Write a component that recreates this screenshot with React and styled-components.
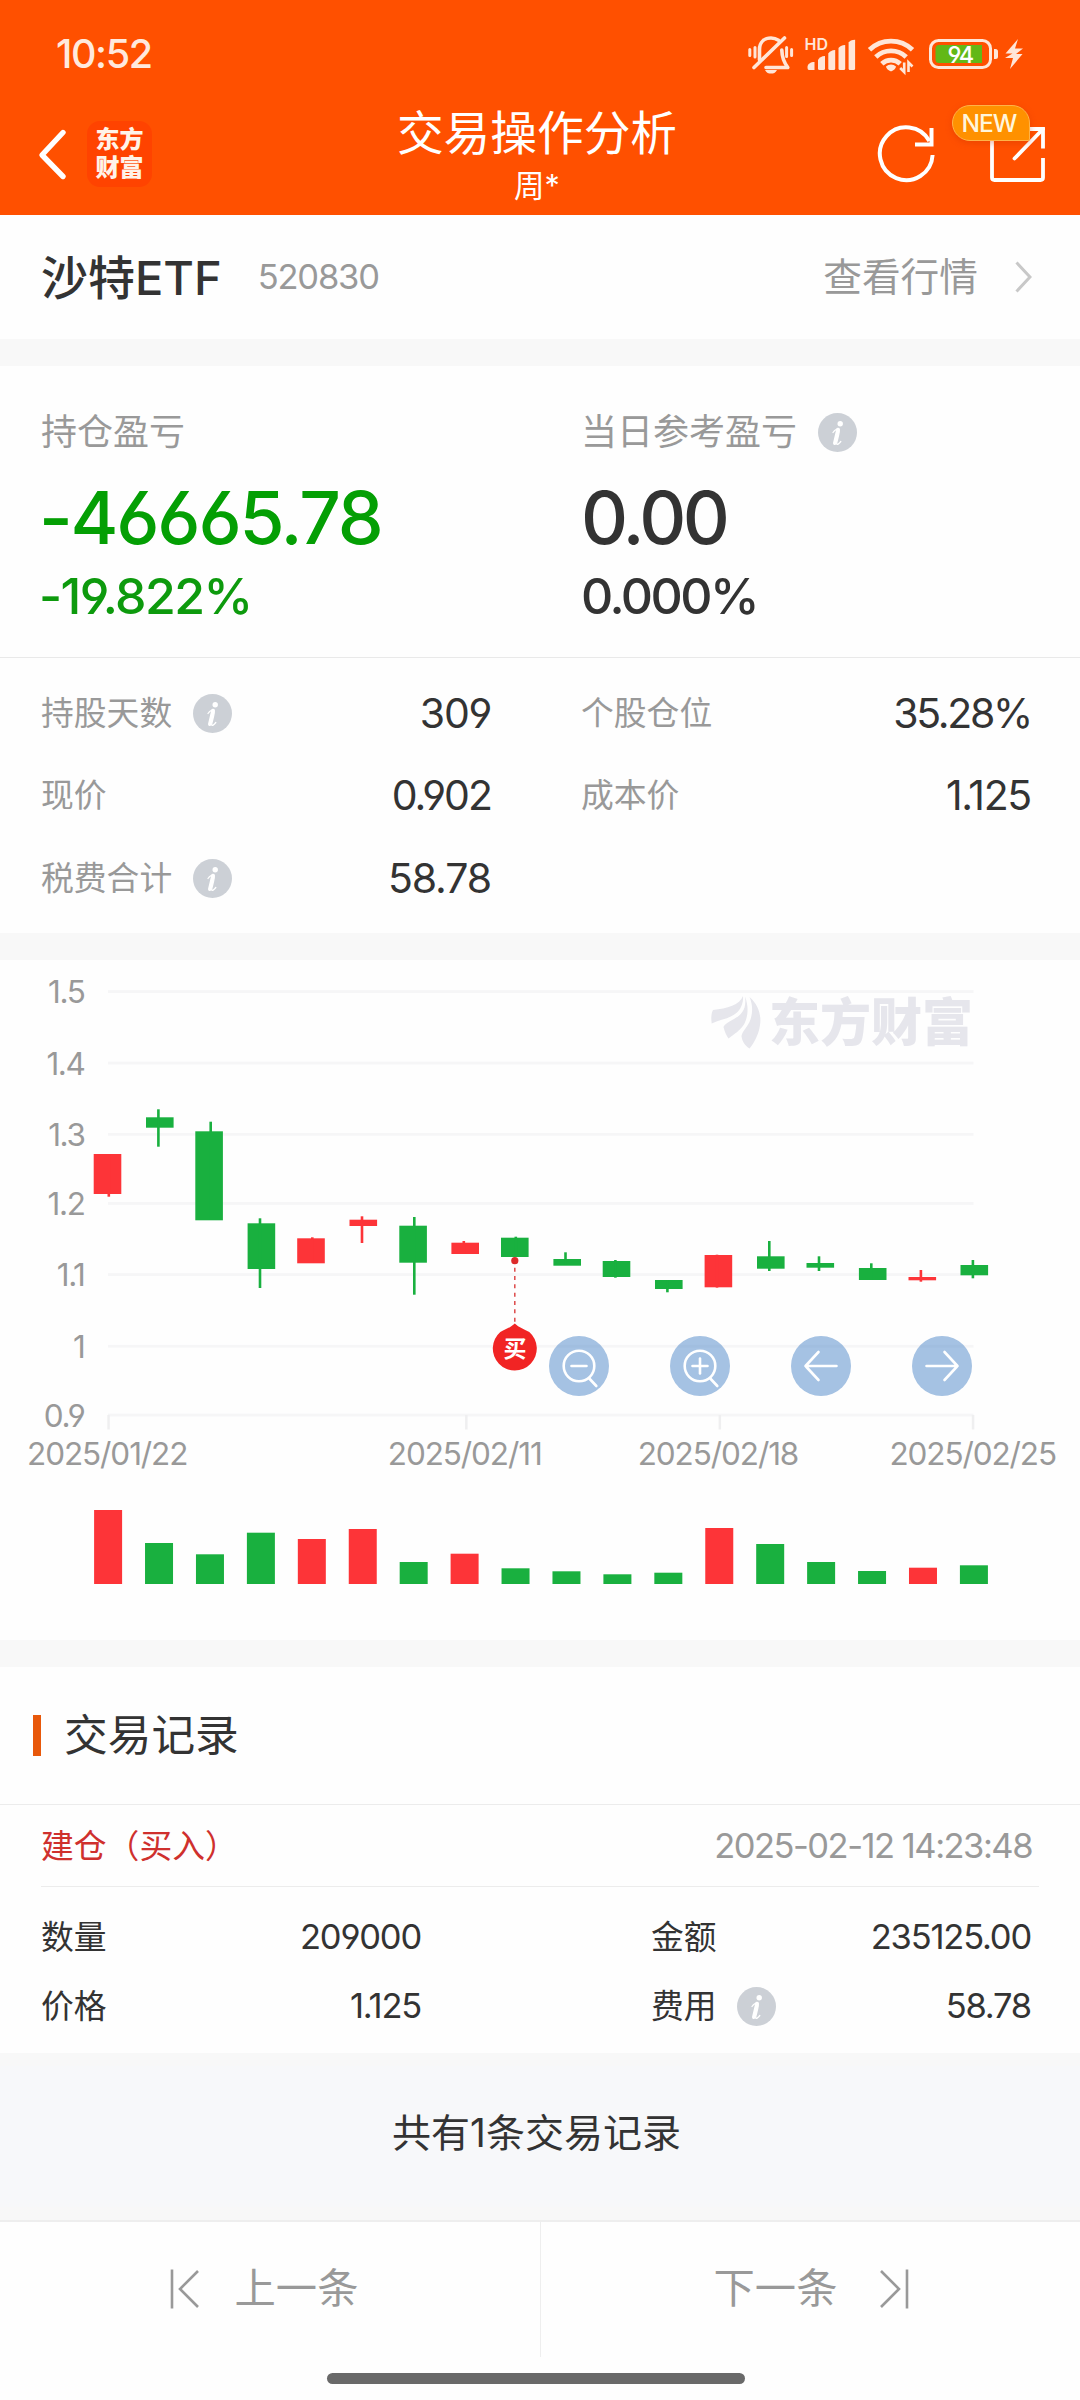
import React from "react";
import styled, { createGlobalStyle } from "styled-components";

const FONT = `Inter, "Noto Sans CJK SC", "Liberation Sans", sans-serif`;
const RED = "#fd3438";
const GREEN = "#19b03f";

const GlobalStyle = createGlobalStyle`
  *, *::before, *::after { box-sizing: border-box; }
  html, body { margin: 0; padding: 0; background: #fff; }
  body { font-family: ${FONT}; font-feature-settings: "cv03", "cv04", "calt" 0; }
  button { font: inherit; color: inherit; background: none; border: 0; padding: 0; }
`;

const Screen = styled.main`
  width: 1080px;
  height: 2400px;
  overflow: hidden;
  display: flex;
  flex-direction: column;
  background: #fefefe;
  color: #333;
  line-height: 1;
  white-space: nowrap;
`;

const Text = styled.span`
  font-size: ${(p) => p.$size}px;
  font-weight: ${(p) => p.$weight || 400};
  letter-spacing: ${(p) => p.$track || 0}px;
  margin-left: ${(p) => p.$outdent || 0}px;
  color: ${(p) => p.$color || "#333"};
  line-height: 1;
`;

const Header = styled.header`
  flex: none;
  height: 215px;
  background: #ff5000;
  color: #fff;
`;

const StatusBar = styled.div`
  height: 107px;
  padding: 2px 52px 0 56px;
  display: flex;
  align-items: center;
  justify-content: space-between;
`;

const NavBar = styled.div`
  height: 108px;
  display: grid;
  grid-template-columns: 360px 1fr 360px;
`;

const NavLeft = styled.div`
  display: flex;
  padding: 14px 0 0 37px;
  gap: 20px;
`;

const BackButton = styled.button`
  width: 30px;
  height: 66px;
  display: flex;
  align-items: center;
`;

const BrandTile = styled.div`
  width: 65px;
  height: 66px;
  border-radius: 13px;
  background: #ff4300;
  display: flex;
  flex-direction: column;
  align-items: center;
  justify-content: center;
  gap: 4px;
  font-size: 24px;
  font-weight: 900;
  line-height: 24px;
  color: #fff3e8;
`;

const NavTitle = styled.div`
  display: flex;
  flex-direction: column;
  align-items: center;
  padding: 3px 6px 0 0;
`;

const NavSub = styled.div`
  display: flex;
  align-items: flex-start;
  margin-top: 14px;
`;

const NavRight = styled.div`
  position: relative;
  padding: 17px 32px 0 0;
  display: flex;
  justify-content: flex-end;
  gap: 50px;
`;

const NewBadge = styled.span`
  position: absolute;
  left: 232px;
  top: -2px;
  width: 78px;
  height: 36px;
  border: 1px solid #ffb347;
  border-radius: 18px 18px 2px 18px;
  background: #ff9100;
  box-shadow: 0 2px 6px rgba(200, 50, 0, 0.35);
  display: flex;
  align-items: center;
  justify-content: center;
  padding-right: 4px;
`;

const StockRow = styled.section`
  flex: none;
  height: 124px;
  padding: 1px 48px 0 41px;
  display: flex;
  align-items: center;
`;

const StockCode = styled.div`
  margin-left: 36px;
  flex: 1;
`;

const QuoteLink = styled.a`
  display: flex;
  align-items: center;
  gap: 37px;
`;

const Gap = styled.div`
  flex: none;
  height: 27px;
  background: #f8f8f8;
`;

const Summary = styled.section`
  flex: none;
  height: 292px;
  display: grid;
  grid-template-columns: 540px 540px;
  border-bottom: 1px solid #e9e9e9;
  padding-top: 46px;
`;

const SummaryCol = styled.div`
  padding-left: 41px;
  display: flex;
  flex-direction: column;
`;

const LabelLine = styled.div`
  display: flex;
  align-items: center;
  gap: ${(p) => p.$gap || 20}px;
  height: 40px;
`;

const BigLine = styled.div`
  display: flex;
  align-items: center;
  height: 74px;
  margin-top: 28px;
`;

const SubLine = styled.div`
  display: flex;
  align-items: center;
  height: 50px;
  margin-top: 17px;
`;

const Metrics = styled.section`
  flex: none;
  height: 275px;
  padding-top: 14px;
  display: grid;
  grid-template-columns: 450px 450px;
  column-gap: 90px;
  grid-auto-rows: 82.5px;
  padding-left: 41px;
`;

const MetricRow = styled.div`
  display: flex;
  align-items: center;
  justify-content: space-between;
`;

const ChartPanel = styled.section`
  flex: none;
  position: relative;
  height: 680px;
`;

const ChartTools = styled.div`
  position: absolute;
  left: 549px;
  top: 376px;
  display: flex;
  gap: 61px;
`;

const ToolButton = styled.button`
  width: 60px;
  height: 60px;
  border-radius: 50%;
  background: rgba(75, 133, 200, 0.5);
  display: flex;
  align-items: center;
  justify-content: center;
`;

const Watermark = styled.div`
  position: absolute;
  left: 711px;
  top: 34px;
  height: 56px;
  display: flex;
  align-items: center;
  gap: 8px;
`;

const SectionHead = styled.div`
  flex: none;
  height: 138px;
  border-bottom: 1px solid #ececec;
  padding-left: 33px;
  display: flex;
  align-items: center;
  gap: 23px;
`;

const Accent = styled.span`
  width: 8px;
  height: 41px;
  background: #e8580a;
`;

const RecordHead = styled.div`
  flex: none;
  height: 82px;
  margin: 0 41px;
  padding: 1px 7px 0 0;
  border-bottom: 1px solid #ececec;
  display: flex;
  align-items: center;
  justify-content: space-between;
`;

const RecordBody = styled.div`
  flex: none;
  height: 166px;
  padding: 16px 49px 0 41px;
  display: grid;
  grid-template-columns: 380px 380px;
  justify-content: space-between;
  grid-auto-rows: 69px;
`;

const Total = styled.div`
  flex: none;
  height: 167px;
  border-top: 13px solid #f8f8f8;
  border-bottom: 13px solid #f8f8f8;
  background: #f7f8fa;
  display: flex;
  align-items: center;
  justify-content: center;
  padding: 0 7px 8px 0;
`;

const Pager = styled.nav`
  flex: none;
  height: 137px;
  border-top: 2px solid #eee;
  display: grid;
  grid-template-columns: 540px 540px;
`;

const PagerButton = styled.button`
  display: flex;
  align-items: center;
  justify-content: center;
  gap: ${(p) => p.$gap}px;
  padding-bottom: 2px;
  padding-${(p) => p.$side}: ${(p) => p.$pad}px;
  & + & { border-left: 1px solid #eee; }
`;

const HomeBar = styled.div`
  flex: none;
  width: 418px;
  height: 11px;
  margin: 16px 0 0 327px;
  border-radius: 6px;
  background: #696969;
`;

function StatusIcons() {
  const c = "#ffe6d8";
  return (
    <svg width="280" height="44" viewBox="748 33 280 44" fill="none">
      <g stroke={c} strokeWidth="3.6" strokeLinecap="round">
        <path d="M749.8 49.5v6M755 47.5v9.5M786.6 47.5v9M791.6 49.5v6" strokeWidth="3" />
        <path d="M759.5 60V49.5C759.5 42 764.5 38 771 38c3 0 5.400 .8 7.500 2.200" />
        <path d="M781.800 50c.2 8 1.800 12 6 17.500H766" strokeLinejoin="round" />
        <path d="M754 67.500L784.500 38" />
      </g>
      <path d="M765 70h12c-1.500 3-3.500 3.600-6 3.600s-4.500-.6-6-3.600z" fill={c} />
      <text x="804.500" y="50" fontFamily="Inter, sans-serif" fontSize="16" fontWeight="600" fill={c}>HD</text>
      <g fill={c}>
        <path d="M807.500 67c0-3 3-5 7-5v8h-5.500c-1.200 0-1.500-1-1.500-3z" />
        <path d="M818 60c1-2 3.500-4 7-4v12.500q0 1.500-1.500 1.500H819.500q-1.500 0-1.500-1.500z" />
        <path d="M828.300 53.500c1-1.500 3.500-3.500 6.900-3.500v18.500q0 1.500-1.500 1.500h-3.900q-1.500 0-1.500-1.500z" />
        <path d="M838.500 48c1-1.500 3.300-3 6.700-3v23.500q0 1.500-1.500 1.500H840q-1.500 0-1.500-1.500z" />
        <path d="M848.600 42.500c1-1.500 3.100-2.800 6.500-2.800v28.800q0 1.500-1.500 1.500H850q-1.400 0-1.400-1.500z" />
      </g>
      <g stroke={c} strokeWidth="4.800">
        <path d="M869.500 49.800a31 31 0 0 1 43 0" />
        <path d="M875.800 57a22 22 0 0 1 30.400 0" />
        <path d="M881.800 63.800a13.500 13.500 0 0 1 18.400 0" />
      </g>
      <path d="M886 66.500a7.500 7.500 0 0 1 10 0c0 2-3.500 4.800-5 4.800s-5-2.800-5-4.800z" fill={c} />
      <path d="M904.200 62.500v9.500l-4-4M908.500 72v-9.500l4 4" stroke={c} strokeWidth="2.600" />
      <rect x="930.500" y="40.500" width="60" height="27" rx="8" stroke={c} strokeWidth="3" />
      <path d="M939 45h43v18h-43q-3.500 0-3.500-3.500v-11q0-3.500 3.500-3.500z" fill="#62b817" />
      <path d="M994 49h1.500q2.500 0 2.500 2.500v5q0 2.500-2.500 2.500H994z" fill={c} />
      <text x="960" y="62.800" textAnchor="middle" fontFamily="Inter, sans-serif" fontSize="23.500" fontWeight="500" letterSpacing="-1.800" fill="#fff">94</text>
      <path d="M1018 39l-12.500 14.500h7l-7.500 4.500h8l-3 11 12.500-15h-6.500l7-5.500h-8z" fill={c} />
    </svg>
  );
}

function InfoIcon() {
  return (
    <svg width="39" height="39" viewBox="0 0 39 39">
      <circle cx="19.500" cy="19.500" r="19.500" fill="#ccd0d6" />
      <circle cx="22.200" cy="10.700" r="2.700" fill="#fff" />
      <path
        d="M15 19.500c1.800-2.700 4.600-4.300 6-3.400 1.500 1-1.700 10.600-2.200 13.400-.4 2 .3 2.300 1.300 1.600 1-.6 1.900-1.500 2.700-2.600"
        fill="none" stroke="#fff" strokeWidth="1.300" strokeLinecap="round"
      />
      <path d="M20 16.600l-3.200 13.600" stroke="#fff" strokeWidth="3.600" strokeLinecap="round" />
    </svg>
  );
}

// [left edge, body top, body bottom, wick x, wick top, wick bottom, rising]
const candles = [
  [93.7, 1154, 1194, 108.8, 1154, 1196.7, 1],
  [146, 1117.3, 1127.7, 158.4, 1109.3, 1146.7, 0],
  [195.3, 1131.3, 1220.3, 210.7, 1121.7, 1220, 0],
  [247.6, 1223.3, 1269, 260, 1218.3, 1288, 0],
  [297.2, 1238.3, 1263.3, 312.3, 1237.3, 1263, 1],
  [349.5, 1219.7, 1226, 362, 1216.3, 1243, 1],
  [399.3, 1225.7, 1262.7, 414.3, 1217, 1294.7, 0],
  [451.4, 1242.7, 1254, 463.8, 1241, 1254, 1],
  [501, 1237.7, 1257, 515.8, 1236.7, 1257, 0],
  [553.4, 1259, 1265.7, 565.5, 1252.3, 1265, 0],
  [602.7, 1261, 1277, 615.4, 1260, 1277.7, 0],
  [655, 1280, 1289, 667.4, 1280, 1292.3, 0],
  [704.6, 1255, 1287.3, 717, 1254.7, 1287.6, 1],
  [757, 1256.3, 1268.7, 769.3, 1241, 1271, 0],
  [806.5, 1263, 1267.7, 819, 1256.3, 1271, 0],
  [858.9, 1268, 1280, 871.3, 1263.3, 1280, 0],
  [908.5, 1277, 1280.3, 920.9, 1270, 1281.7, 1],
  [960.5, 1265, 1275.3, 972.9, 1260, 1278.3, 0],
];

const volumeTops = [
  1510, 1543, 1554.3, 1532.7, 1539, 1529, 1562, 1553.7, 1568.3,
  1571.3, 1574.3, 1572.7, 1528, 1544, 1562, 1571, 1567.7, 1565.3,
];

const yAxis = [
  ["1.5", 991.5], ["1.4", 1063], ["1.3", 1134.3], ["1.2", 1203.4],
  ["1.1", 1274.5], ["1", 1346.2], ["0.9", 1415],
];

// [label, tick x, label centre x]
const xAxis = [
  ["2025/01/22", 108.5, 107.2],
  ["2025/02/11", 466.3, 464.7],
  ["2025/02/18", 719.8, 718],
  ["2025/02/25", 973, 972.7],
];

function KLineChart() {
  return (
    <svg width="1080" height="680" viewBox="0 960 1080 680" fontFamily={FONT}>
      {yAxis.map(([label, y]) => (
        <g key={label}>
          <rect x="108" y={y - 1.3} width="865.500" height="2.700" fill="#f6f6f7" />
          <text x="84.500" y={y + 11.8} textAnchor="end" fontSize="31.500" letterSpacing="-1.400" fill="#999">{label}</text>
        </g>
      ))}
      {xAxis.map(([label, tick, x]) => (
        <g key={label}>
          <rect x={tick - 1.2} y="1415" width="2.500" height="14.500" fill="#efeff0" />
          <text x={x} y="1464.800" textAnchor="middle" fontSize="31.500" letterSpacing="-1.100" fill="#999">{label}</text>
        </g>
      ))}
      {candles.map(([x, top, bottom, wx, wTop, wBottom, up]) => (
        <g key={x} fill={up ? RED : GREEN}>
          <rect x={x} y={top} width="27.600" height={bottom - top} />
          <rect x={wx - 1.3} y={wTop} width="2.600" height={wBottom - wTop} />
        </g>
      ))}
      {volumeTops.map((top, i) => (
        <rect key={i} x={94.1 + i * 50.93} y={top} width="28" height={1584 - top} fill={candles[i][6] ? RED : GREEN} />
      ))}
      <circle cx="514.800" cy="1260.700" r="3.600" fill="#dc2a2a" />
      <path d="M514.800 1267.700V1324" stroke="#dd4a4a" strokeWidth="1.500" strokeDasharray="4 4.330" />
      <path d="M514.800 1323.500c4 4 10 6 14.500 8.500a22 22 0 1 1-29 0c4.500-2.500 10.500-4.500 14.500-8.500z" fill="#f12424" />
      <text x="515" y="1357" textAnchor="middle" fontSize="23" fontWeight="700" fill="#fff">买</text>
    </svg>
  );
}

function BrandLeaf() {
  return (
    <svg width="50" height="56" viewBox="711 994 50 56" fill="#e6e6ec">
      <path d="M743 996c-3 9-16 12.500-30 14-2 4-2 9-1.300 13.500 8-4 20-5 26.300-12 4-4.500 5.500-10 5-15.500z" />
      <path d="M745 996.500c2 14-5 19-11 22.500-5 3-9.500 5-10.500 8 1 4 2.500 8 5 11.500 5-4 12-8 16-15 4-8 4-18 .5-27z" />
      <path d="M749.500 997c9 8 12 18 10.500 28-1 8-5 17-10.500 23.500-4-2.500-7.500-7-8-12.500 1-5 5-8 8-14 3.500-8 3.500-17 0-25z" />
    </svg>
  );
}

function ToolIcon({ kind }) {
  return (
    <svg width="60" height="60" viewBox="0 0 60 60" fill="none" stroke="#fff" strokeWidth="2.600" strokeLinecap="round" strokeLinejoin="round">
      {(kind === "out" || kind === "in") && (
        <>
          <circle cx="30" cy="30" r="15.300" />
          <path d="M22.500 30h15M40.300 42.500l7 7.500" />
        </>
      )}
      {kind === "in" && <path d="M30 22.500v15" />}
      {kind === "prev" && <path d="M45.500 30H14.500M27.500 16L14.500 30l13 14" />}
      {kind === "next" && <path d="M14.500 30h31M32.500 16l13 14-13 14" />}
    </svg>
  );
}

const metrics = [
  { label: "持股天数", value: "309", track: -1.3, info: true },
  { label: "个股仓位", value: "35.28%", track: -2.3 },
  { label: "现价", value: "0.902", track: -2 },
  { label: "成本价", value: "1.125", track: -1.3 },
  { label: "税费合计", value: "58.78", track: -1.1, info: true },
];

const record = [
  { label: "数量", value: "209000" },
  { label: "金额", value: "235125.00" },
  { label: "价格", value: "1.125" },
  { label: "费用", value: "58.78", info: true },
];

export default function App() {
  return (
    <>
      <GlobalStyle />
      <Screen>
        <Header>
          <StatusBar>
            <Text $size={39.5} $weight={500} $track={-1.4} $color="#ffe9dd">10:52</Text>
            <StatusIcons />
          </StatusBar>
          <NavBar>
            <NavLeft>
              <BackButton>
                <svg width="30" height="54" viewBox="0 0 30 54" fill="none" stroke="#fff" strokeWidth="5.400" strokeLinecap="round" strokeLinejoin="round">
                  <path d="M26 5.500L5 28l21 21.500" />
                </svg>
              </BackButton>
              <BrandTile>
                <span>东方</span>
                <span>财富</span>
              </BrandTile>
            </NavLeft>
            <NavTitle>
              <Text $size={46.7} $color="#fff">交易操作分析</Text>
              <NavSub><Text $size={30.5} $color="#fff">周*</Text></NavSub>
            </NavTitle>
            <NavRight>
              <svg width="62" height="62" viewBox="876 124 62 62" fill="none" stroke="#fff" strokeWidth="4" strokeLinecap="butt">
                <path d="M932.600 155a26.400 26.400 0 1 1-3.200-14" />
                <path d="M931.500 128v16.500h-16.500" />
              </svg>
              <svg width="60" height="62" viewBox="988 124 60 62" fill="none" stroke="#fff" strokeWidth="3.800">
                <path d="M992 136v41.500q0 2.500 2.500 2.500h46q2.500 0 2.500-2.500V158" />
                <path d="M1024 129h19v19.500" />
                <path d="M1014.500 158.500L1043 129" strokeLinecap="round" />
              </svg>
              <NewBadge><Text $size={24.5} $weight={500} $track={-1} $color="#fff6dc">NEW</Text></NewBadge>
            </NavRight>
          </NavBar>
        </Header>

        <StockRow>
          <Text $size={47} $weight={500}>沙特ETF</Text>
          <StockCode><Text $size={34.5} $track={-1.2} $color="#999">520830</Text></StockCode>
          <QuoteLink>
            <Text $size={38.7} $color="#999">查看行情</Text>
            <svg width="17" height="32" viewBox="0 0 17 32" fill="none" stroke="#c8c8c8" strokeWidth="3">
              <path d="M1.500 1.500L15 16 1.500 30.500" />
            </svg>
          </QuoteLink>
        </StockRow>
        <Gap />

        <Summary>
          <SummaryCol>
            <LabelLine><Text $size={36} $color="#999">持仓盈亏</Text></LabelLine>
            <BigLine><Text $size={73} $weight={500} $track={-2.2} $outdent={-2} $color="#049f04">-46665.78</Text></BigLine>
            <SubLine><Text $size={50} $weight={500} $track={-1.6} $outdent={-2} $color="#0d9a0d">-19.822%</Text></SubLine>
          </SummaryCol>
          <SummaryCol>
            <LabelLine $gap={21}><Text $size={36} $color="#999">当日参考盈亏</Text><InfoIcon /></LabelLine>
            <BigLine><Text $size={73} $weight={500} $track={-3.6}>0.00</Text></BigLine>
            <SubLine><Text $size={50} $weight={500} $track={-2.5}>0.000%</Text></SubLine>
          </SummaryCol>
        </Summary>

        <Metrics>
          {metrics.map((m) => (
            <MetricRow key={m.label}>
              <LabelLine $gap={21}>
                <Text $size={32.8} $color="#999">{m.label}</Text>
                {m.info && <InfoIcon />}
              </LabelLine>
              <Text $size={41} $track={m.track}>{m.value}</Text>
            </MetricRow>
          ))}
        </Metrics>
        <Gap />

        <ChartPanel>
          <KLineChart />
          <Watermark>
            <BrandLeaf />
            <Text $size={51} $weight={900} $color="#e6e6ec">东方财富</Text>
          </Watermark>
          <ChartTools>
            {["out", "in", "prev", "next"].map((kind) => (
              <ToolButton key={kind}><ToolIcon kind={kind} /></ToolButton>
            ))}
          </ChartTools>
        </ChartPanel>
        <Gap />

        <SectionHead>
          <Accent />
          <Text $size={43.7}>交易记录</Text>
        </SectionHead>
        <RecordHead>
          <Text $size={32.8} $color="#cf302d">建仓（买入）</Text>
          <Text $size={34.5} $track={-1.5} $color="#999">2025-02-12 14:23:48</Text>
        </RecordHead>
        <RecordBody>
          {record.map((r) => (
            <MetricRow key={r.label}>
              <LabelLine>
                <Text $size={32.8}>{r.label}</Text>
                {r.info && <InfoIcon />}
              </LabelLine>
              <Text $size={34.5} $track={-1.2}>{r.value}</Text>
            </MetricRow>
          ))}
        </RecordBody>

        <Total><Text $size={39}>共有1条交易记录</Text></Total>

        <Pager>
          <PagerButton $gap={35} $side="right" $pad={12}>
            <svg width="30" height="40" viewBox="0 0 30 40" fill="none" stroke="#999" strokeWidth="2.600">
              <path d="M2 0.500v39M28 2L10 20l18 18" />
            </svg>
            <Text $size={41.3} $color="#999">上一条</Text>
          </PagerButton>
          <PagerButton $gap={42} $side="left" $pad={2}>
            <Text $size={41.3} $color="#999">下一条</Text>
            <svg width="30" height="40" viewBox="0 0 30 40" fill="none" stroke="#999" strokeWidth="2.600">
              <path d="M28 0.500v39M2 2l18 18L2 38" />
            </svg>
          </PagerButton>
        </Pager>
        <HomeBar />
      </Screen>
    </>
  );
}
